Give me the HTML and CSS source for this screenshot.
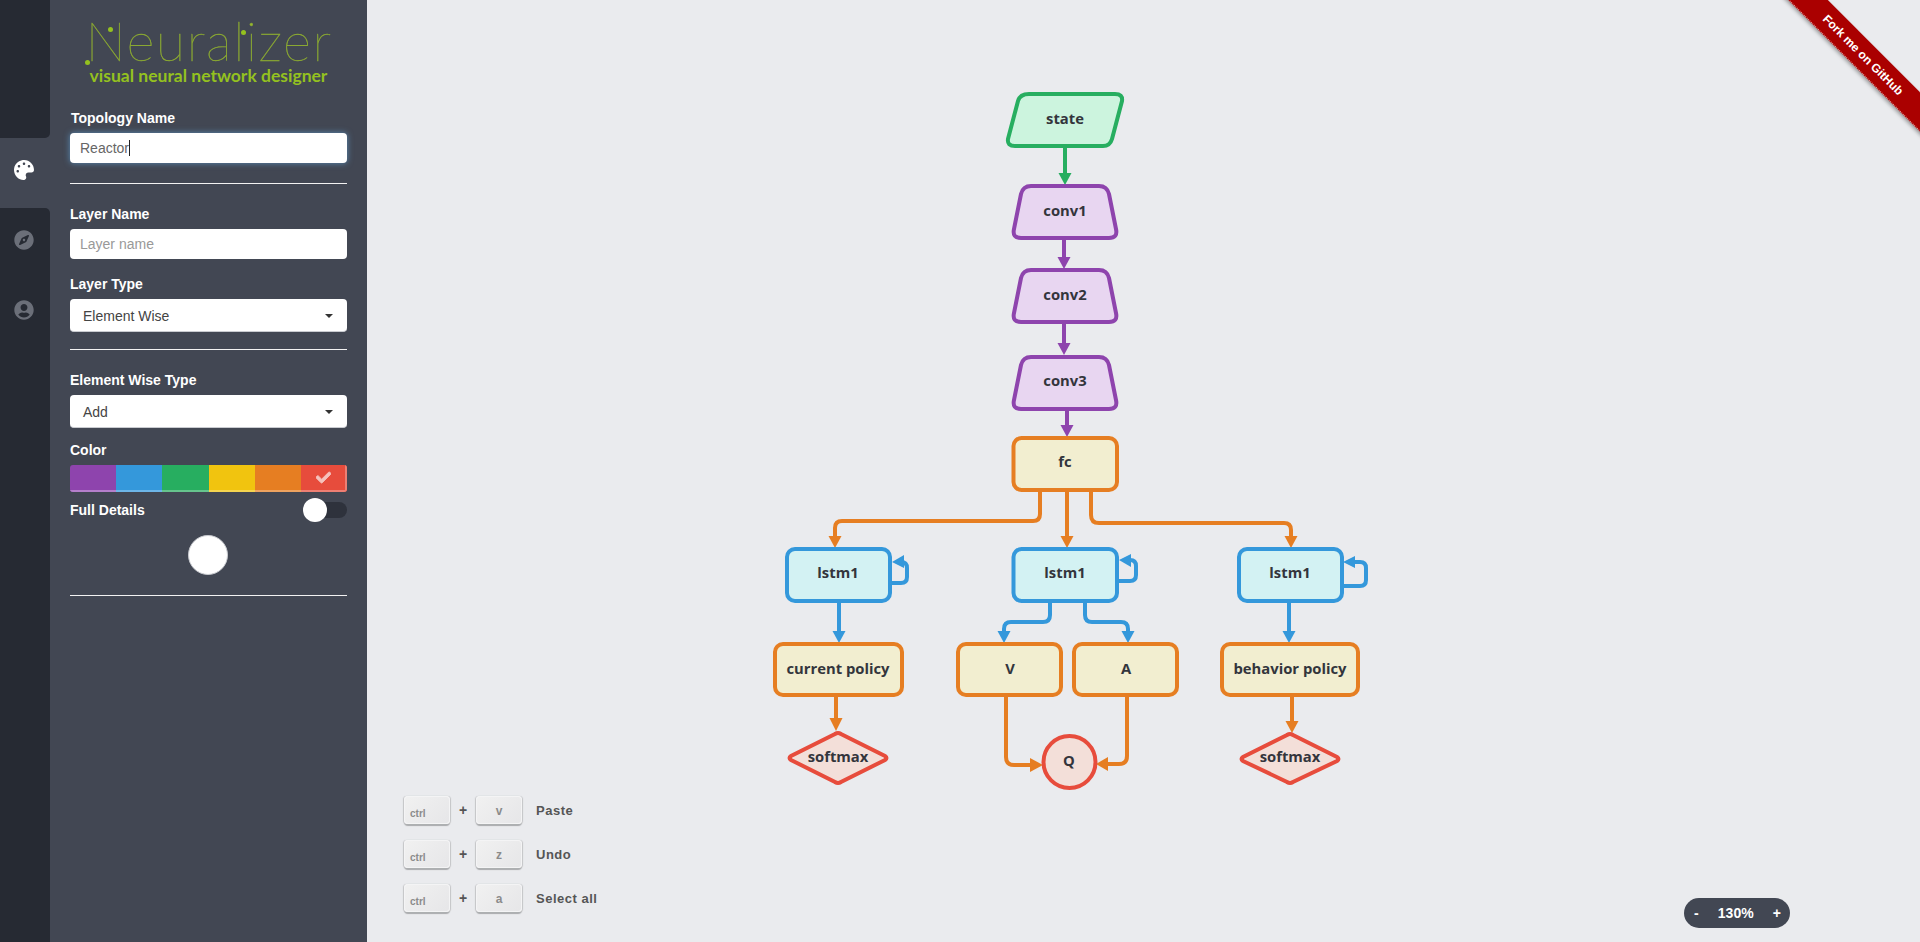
FILE: index.html
```html
<!DOCTYPE html>
<html lang="en">
<head>
<meta charset="utf-8">
<title>Neuralizer</title>
<link rel="stylesheet" href="styles.css">
</head>
<body>
<div class="app">
  <aside class="sidebar">
    <nav class="nav">
      <div class="nav-fill nav-fill-top"></div>
      <a class="nav-item active">
        <svg class="nav-icon" viewBox="0 0 512 512"><path d="M204.3 5C104.9 24.4 24.8 104.3 5.2 203.4c-37 187 131.7 326.4 258.8 306.7 41.2-6.4 61.4-54.6 42.5-91.7-23.1-45.4 9.9-98.4 60.9-98.4h79.7c35.8 0 64.8-29.6 64.9-65.3C511.5 97.1 368.1-26.9 204.3 5zM96 320c-17.7 0-32-14.3-32-32s14.3-32 32-32 32 14.3 32 32-14.3 32-32 32zm32-128c-17.7 0-32-14.3-32-32s14.3-32 32-32 32 14.3 32 32-14.3 32-32 32zm128-64c-17.7 0-32-14.3-32-32s14.3-32 32-32 32 14.3 32 32-14.3 32-32 32zm128 64c-17.7 0-32-14.3-32-32s14.3-32 32-32 32 14.3 32 32-14.3 32-32 32z"/></svg>
      </a>
      <div class="nav-fill nav-fill-bottom">
        <a class="nav-item">
          <svg class="nav-icon" viewBox="0 0 496 512"><path d="M225.38 233.37c-12.5 12.5-12.5 32.76 0 45.25 12.49 12.5 32.76 12.5 45.25 0 12.5-12.5 12.5-32.76 0-45.25-12.5-12.49-32.76-12.49-45.25 0zM248 8C111.03 8 0 119.03 0 256s111.03 248 248 248 248-111.03 248-248S384.97 8 248 8zm126.14 148.05L308.17 300.4a31.938 31.938 0 0 1-15.77 15.77l-144.34 65.97c-16.65 7.61-33.81-9.55-26.2-26.2l65.98-144.35a31.938 31.938 0 0 1 15.77-15.77l144.34-65.97c16.65-7.6 33.8 9.55 26.19 26.2z"/></svg>
        </a>
        <a class="nav-item">
          <svg class="nav-icon" viewBox="0 0 496 512"><path d="M248 8C111 8 0 119 0 256s111 248 248 248 248-111 248-248S385 8 248 8zm0 96c48.6 0 88 39.4 88 88s-39.4 88-88 88-88-39.4-88-88 39.4-88 88-88zm0 344c-58.7 0-111.3-26.6-146.5-68.2 18.8-35.4 55.6-59.8 98.5-59.8 2.4 0 4.8.4 7.1 1.1 13 4.2 26.6 6.9 40.9 6.9 14.3 0 28-2.7 40.9-6.9 2.3-.7 4.7-1.1 7.1-1.1 42.9 0 79.7 24.4 98.5 59.8C359.3 421.4 306.7 448 248 448z"/></svg>
        </a>
      </div>
    </nav>
    <section class="panel">
      <header class="brand">
        <div class="wordmark"><span class="word">Neuralizer</span><span class="dot dot-n1"></span><span class="dot dot-n2"></span><span class="dot dot-i"></span></div>
        <div class="tagline">visual neural network designer</div>
      </header>

      <label class="label">Topology Name</label>
      <div class="input input-focus">Reactor<span class="text-caret"></span></div>
      <hr class="rule rule-a">

      <label class="label">Layer Name</label>
      <div class="input input-empty">Layer name</div>

      <label class="label label-tight">Layer Type</label>
      <div class="select">Element Wise<span class="select-arrow"></span></div>
      <hr class="rule rule-b">

      <label class="label">Element Wise Type</label>
      <div class="select">Add<span class="select-arrow"></span></div>

      <label class="label label-color">Color</label>
      <div class="swatches">
        <span class="swatch purple"></span>
        <span class="swatch blue"></span>
        <span class="swatch green"></span>
        <span class="swatch yellow"></span>
        <span class="swatch orange"></span>
        <span class="swatch red">
          <svg class="check" viewBox="0 0 512 512"><path d="M173.898 439.404l-166.4-166.4c-9.997-9.997-9.997-26.206 0-36.204l36.203-36.204c9.997-9.998 26.207-9.998 36.204 0L192 312.69 432.095 72.596c9.997-9.997 26.207-9.997 36.204 0l36.203 36.204c9.997 9.997 9.997 26.206 0 36.204l-294.4 294.401c-9.998 9.997-26.207 9.997-36.204-.001z"/></svg>
        </span>
      </div>
      <div class="detail-row">
        <span class="label-inline">Full Details</span>
        <span class="toggle"><span class="toggle-thumb"></span></span>
      </div>
      <div class="circle-btn"></div>
      <hr class="rule rule-a">
    </section>
  </aside>

  <main class="canvas">
    <svg class="diagram" viewBox="367 0 1553 942" width="1553" height="942">
      <defs>
        <path id="trap" d="M1031 186H1099Q1107 186 1109 194L1116 229Q1118 238 1109 238H1021Q1012 238 1014 229L1021 194Q1023 186 1031 186Z"/>
      </defs>

      <!-- edges -->
      <g class="edge e-green">
        <path d="M1065 148V175"/>
      </g>
      <polygon class="head h-green" points="1058.5,173 1071.5,173 1065,185"/>

      <g class="edge e-purple">
        <path d="M1064 240V259"/>
        <path d="M1064 323V345"/>
        <path d="M1067 410V427"/>
      </g>
      <polygon class="head h-purple" points="1057.5,257 1070.5,257 1064,269"/>
      <polygon class="head h-purple" points="1057.5,343 1070.5,343 1064,355"/>
      <polygon class="head h-purple" points="1060.5,425 1073.5,425 1067,437"/>

      <g class="edge e-orange">
        <path d="M1040 492V514Q1040 521 1033 521H842Q835 521 835 528V538"/>
        <path d="M1067 492V538"/>
        <path d="M1091 492V515Q1091 523 1099 523H1284Q1291 523 1291 530V538"/>
        <path d="M836 697V720"/>
        <path d="M1292 697V723"/>
        <path d="M1006 697V757Q1006 765 1014 765H1032"/>
        <path d="M1127 697V756Q1127 764 1119 764H1107"/>
      </g>
      <polygon class="head h-orange" points="828.5,536 841.5,536 835,548"/>
      <polygon class="head h-orange" points="1060.5,536 1073.5,536 1067,548"/>
      <polygon class="head h-orange" points="1284.5,536 1297.5,536 1291,548"/>
      <polygon class="head h-orange" points="829.5,718 842.5,718 836,731"/>
      <polygon class="head h-orange" points="1285.5,721 1298.5,721 1292,733"/>
      <polygon class="head h-orange" points="1030,758 1030,772 1043,765"/>
      <polygon class="head h-orange" points="1108,757 1108,771 1096,764"/>

      <g class="edge e-blue">
        <path d="M892 583H901Q907 583 907 577V568Q907 562 901 562H898"/>
        <path d="M1119 581H1130Q1136 581 1136 575V566Q1136 560 1130 560H1126"/>
        <path d="M1344 586H1360Q1366 586 1366 580V568Q1366 562 1360 562H1352"/>
        <path d="M839 603V633"/>
        <path d="M1050 603V615Q1050 622 1043 622H1011Q1004 622 1004 629V633"/>
        <path d="M1085 603V615Q1085 622 1092 622H1121Q1128 622 1128 629V633"/>
        <path d="M1289 603V633"/>
      </g>
      <polygon class="head h-blue" points="904,555 904,568 892,562"/>
      <polygon class="head h-blue" points="1131,554 1131,567 1119,560"/>
      <polygon class="head h-blue" points="1355,556 1355,568 1343,562"/>
      <polygon class="head h-blue" points="832.5,631 845.5,631 839,643"/>
      <polygon class="head h-blue" points="997.5,631 1010.5,631 1004,643"/>
      <polygon class="head h-blue" points="1121.5,631 1134.5,631 1128,643"/>
      <polygon class="head h-blue" points="1282.5,631 1295.5,631 1289,643"/>

      <!-- nodes -->
      <path class="node n-green" d="M1029 94H1115Q1123 94 1122 101L1112 139Q1110 146 1103 146H1015Q1007 146 1008 139L1018 101Q1020 94 1029 94Z"/>
      <text class="node-text" x="1065" y="118">state</text>

      <use class="node n-purple" href="#trap"/>
      <text class="node-text" x="1065" y="210">conv1</text>
      <use class="node n-purple" href="#trap" y="84"/>
      <text class="node-text" x="1065" y="294">conv2</text>
      <use class="node n-purple" href="#trap" y="171"/>
      <text class="node-text" x="1065" y="380">conv3</text>

      <rect class="node n-orange" x="1013.5" y="438" width="103.5" height="52" rx="8"/>
      <text class="node-text" x="1065" y="461">fc</text>

      <rect class="node n-blue" x="787" y="549" width="103" height="52" rx="8"/>
      <text class="node-text" x="838" y="572">lstm1</text>
      <rect class="node n-blue" x="1013.5" y="549" width="103.5" height="52" rx="8"/>
      <text class="node-text" x="1065" y="572">lstm1</text>
      <rect class="node n-blue" x="1239" y="549" width="103" height="52" rx="8"/>
      <text class="node-text" x="1290" y="572">lstm1</text>

      <rect class="node n-orange" x="775" y="644" width="127" height="51" rx="8"/>
      <text class="node-text" x="838" y="668">current policy</text>
      <rect class="node n-orange" x="958" y="644" width="103" height="51" rx="8"/>
      <text class="node-text" x="1010" y="668">V</text>
      <rect class="node n-orange" x="1074" y="644" width="103" height="51" rx="8"/>
      <text class="node-text" x="1126" y="668">A</text>
      <rect class="node n-orange" x="1222" y="644" width="136" height="51" rx="8"/>
      <text class="node-text" x="1290" y="668">behavior policy</text>

      <path class="node n-red" d="M835 734Q838 732 841 734L885 756Q888 758 885 760L841 782Q838 784 835 782L791 760Q788 758 791 756Z"/>
      <text class="node-text" x="838" y="756">softmax</text>
      <path class="node n-red" d="M1287 735Q1290 733 1293 735L1337 757Q1340 759 1337 761L1293 782Q1290 784 1287 782L1243 761Q1240 759 1243 757Z"/>
      <text class="node-text" x="1290" y="756">softmax</text>

      <circle class="node n-red" cx="1069.5" cy="762" r="26"/>
      <text class="node-text" x="1069" y="760">Q</text>
    </svg>

    <div class="shortcuts">
      <div class="shortcut"><kbd class="key">ctrl</kbd><span class="plus">+</span><kbd class="key key-center">v</kbd><span class="action">Paste</span></div>
      <div class="shortcut"><kbd class="key">ctrl</kbd><span class="plus">+</span><kbd class="key key-center">z</kbd><span class="action">Undo</span></div>
      <div class="shortcut"><kbd class="key">ctrl</kbd><span class="plus">+</span><kbd class="key key-center">a</kbd><span class="action">Select all</span></div>
    </div>

    <div class="zoom-pill"><span>-</span><span>130%</span><span>+</span></div>

    <div class="ribbon-wrap"><a class="ribbon">Fork me on GitHub</a></div>
  </main>
</div>
</body>
</html>
```

FILE: styles.css
```css
* { box-sizing: border-box; }
html, body { margin: 0; height: 100%; overflow: hidden; }
body { font-family: "Liberation Sans", Arial, sans-serif; background: #eaebee; }
.app { display: flex; height: 942px; }

/* sidebar */
.sidebar { display: flex; width: 367px; flex: none; background: #424753; }
.nav { width: 50px; flex: none; display: flex; flex-direction: column; }
.nav-fill { background: #262a33; }
.nav-fill-top { height: 138px; border-bottom-right-radius: 5px; }
.nav-fill-bottom { flex: 1; border-top-right-radius: 5px; }
.nav-item { display: flex; align-items: center; justify-content: center; height: 70px; padding: 0 2px 7px 0; }
.nav-icon { width: 20px; height: 20px; fill: #6b6f79; }
.active { background: #424753; }
.active .nav-icon { fill: #fff; }

.panel { flex: 1; padding: 0 20px; min-width: 0; }
.brand { height: 108px; position: relative; text-align: center; }
.wordmark {
  position: absolute; left: 14px; top: 11px; width: 250px; height: 60px;
  font-family: Lato, sans-serif; font-weight: 100; font-size: 54px; line-height: 60px;
  letter-spacing: 1.5px; color: #94b52e; white-space: nowrap;
}
.word { -webkit-text-stroke: .35px #8aa832; }
.dot { position: absolute; width: 5px; height: 5px; border-radius: 50%; background: #94c11f; }
.dot-n1 { left: 24px; top: 16px; }
.dot-n2 { left: 1px; top: 49px; }
.dot-i { left: 157px; top: 19px; }
.tagline {
  position: absolute; left: 0; right: 0; top: 65px;
  font-family: Lato, sans-serif; font-weight: 700; font-size: 17.5px; line-height: 22px; color: #94c11f;
}

.label { display: block; height: 20px; line-height: 20px; margin: 20px 0 5px; font-size: 14px; font-weight: 700; color: #fff; }
.brand + .label { margin-top: 0; padding-left: 1px; }
.label-tight { margin-top: 15px; }
.label-color { margin-top: 12px; }
.input {
  height: 30px; padding: 0 10px; border-radius: 4px; background: #fff;
  font-size: 14px; line-height: 30px; color: #666;
}
.input-focus { box-shadow: 0 0 6px rgba(102,175,233,.65); }
.input-empty { color: #999; }
.text-caret { display: inline-block; width: 1px; height: 16px; background: #222; vertical-align: -3px; }
.select {
  position: relative; height: 33px; padding: 1px 13px 0; border-radius: 4px; background: #fff;
  border-bottom: 1px solid #c9cbd0;
  font-size: 14px; line-height: 33px; color: #444;
}
.select-arrow {
  position: absolute; right: 14px; top: 15px;
  border-top: 4px solid #333; border-left: 4px solid transparent; border-right: 4px solid transparent;
}
.rule { height: 1px; border: 0; margin: 0; background: #f2f2f2; }
.rule-a { margin-top: 20px; }
.rule-b { margin-top: 17px; }

.swatches { display: flex; height: 27px; border-radius: 3px; overflow: hidden; }
.swatch { flex: 1; display: flex; align-items: center; justify-content: center; border-bottom: 2px solid; }
.purple { background: #8e44ad; border-color: #b57fcb; }
.blue { background: #3498db; border-color: #6db6e8; }
.green { background: #27ae60; border-color: #66c48d; }
.yellow { background: #f1c40f; border-color: #f5d54f; }
.orange { background: #e67e22; border-color: #eea35f; }
.red { background: #e74c3c; border-color: #ee7f73; box-shadow: inset -2px 0 0 #ee7f73; }
.check { width: 15px; height: 15px; fill: #f5c2bc; stroke: #f5c2bc; stroke-width: 30; }

.detail-row { display: flex; align-items: center; justify-content: space-between; height: 24px; margin-top: 6px; }
.label-inline { font-size: 14px; font-weight: 700; color: #fff; }
.toggle { position: relative; width: 44px; height: 16px; border-radius: 8px; background: #2e323c; }
.toggle-thumb { position: absolute; left: 0; top: -4px; width: 24px; height: 24px; border-radius: 50%; background: #fff; }
.circle-btn { width: 40px; height: 40px; margin: 13px 0 0 118px; border-radius: 50%; background: #fff; border: 1px solid #c9cbd0; }

/* canvas */
.canvas { position: relative; flex: 1; overflow: hidden; background: #eaebee; }
.diagram { display: block; }
.edge path { fill: none; stroke-width: 4; }
.e-green path { stroke: #27ae60; }
.e-purple path { stroke: #8e44ad; }
.e-orange path { stroke: #e67e22; }
.e-blue path { stroke: #3498db; }
.h-green { fill: #27ae60; }
.h-purple { fill: #8e44ad; }
.h-orange { fill: #e67e22; }
.h-blue { fill: #3498db; }
.node { stroke-width: 4; }
.n-green { fill: #ccf4de; stroke: #27ae60; }
.n-purple { fill: #e8d6f1; stroke: #8e44ad; }
.n-orange { fill: #f2eed0; stroke: #e67e22; }
.n-blue { fill: #d3f2f3; stroke: #3498db; }
.n-red { fill: #f3dfd9; stroke: #e74c3c; }
.node-text {
  font-family: "Open Sans", sans-serif; font-weight: 700; font-size: 14.8px;
  fill: #33353c; text-anchor: middle; dominant-baseline: central;
}

.shortcuts { position: absolute; left: 37px; top: 796px; display: flex; flex-direction: column; gap: 14px; }
.shortcut { display: flex; align-items: center; height: 30px; }
.key {
  width: 46px; height: 28px; margin-bottom: 2px; padding: 11px 0 0 6px; border-radius: 4px;
  background: linear-gradient(135deg, #f1f1f1, #e6e6e8);
  box-shadow: inset 0 0 0 1px #f4f4f5, -1px 0 1px -0.5px #c4c5c7, 1px 0 1px -0.5px #c4c5c7, 0 2px 1px #a9aaac;
  font-family: "Liberation Sans", Arial, sans-serif; font-size: 10px; font-weight: 700; line-height: 14px; color: #8b8b8b;
}
.key-center { padding: 6px 0 0; text-align: center; font-size: 12px; line-height: 18px; }
.plus { width: 26px; text-align: center; font-size: 14px; font-weight: 700; color: #555; margin-top: -2px; }
.action { margin-left: 14px; font-size: 13px; font-weight: 700; letter-spacing: .5px; color: #555; margin-top: -2px; }

.zoom-pill {
  position: absolute; left: 1317px; top: 898px; width: 106px; height: 30px; padding: 0 9px 0 10px;
  display: flex; align-items: center; justify-content: space-between;
  border-radius: 15px; background: #424753; color: #fff; font-size: 14px; font-weight: 700;
}

.ribbon-wrap { position: absolute; top: 0; right: 0; width: 160px; height: 140px; overflow: hidden; }
.ribbon {
  position: absolute; left: -22px; top: 41px; width: 250px; height: 28px;
  transform: rotate(45deg);
  background: #a00; color: #fff; text-align: center;
  font-size: 12px; font-weight: 700; line-height: 28px;
  border-bottom: 1px dotted #e6a0a0;
  box-shadow: 0 2px 4px rgba(0,0,0,.35);
}
```
